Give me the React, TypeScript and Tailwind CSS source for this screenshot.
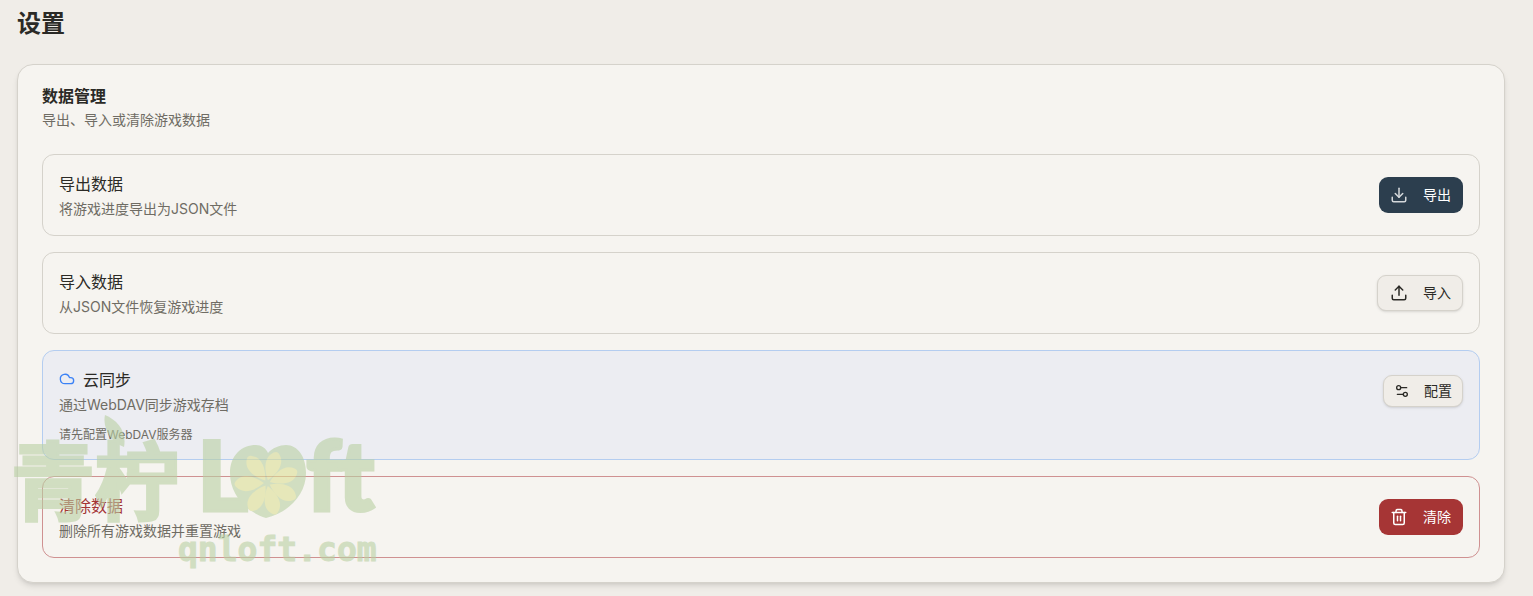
import { Cloud, Download, Settings2, Trash2, Upload } from "lucide-react";

const FONT = "[font-family:Inter,'Noto_Sans_CJK_SC',sans-serif]";
const PETALS = [-35, 18, 68, 118, 165, 212, 268];

function Row({
  title,
  desc,
  children,
}: {
  title: string;
  desc: string;
  children: React.ReactNode;
}) {
  return (
    <div className="flex h-[82px] items-center justify-between rounded-xl border border-[#d5d2cb] p-4">
      <div className="flex flex-col gap-[3px] pt-px">
        <div className="text-base leading-6 text-[#2b2a26]">{title}</div>
        <div className="text-sm leading-5 text-[#6f6c64]">{desc}</div>
      </div>
      {children}
    </div>
  );
}

// Watermark in the lower left corner, sits over the page content.
function Watermark() {
  return (
    <div className="pointer-events-none absolute left-[11px] top-[412px] h-[160px] w-[372px] select-none opacity-60">
      <svg viewBox="0 0 22 32" className="absolute left-[92px] top-[3px] h-[32px] w-[22px]">
        <path d="M2 0C14 5 24 16 21 32C9 28 -1 14 2 0Z" fill="#b9d0a3" />
      </svg>
      <div className="absolute left-0 top-[5px] [font-family:'Noto_Sans_CJK_SC',sans-serif] text-[84px] font-bold leading-[120px] text-[#b9d0a3] [-webkit-text-stroke:3px_#b9d0a3]">
        青柠
      </div>
      <div className="absolute left-[186px] top-[1px] [font-family:Lato,sans-serif] text-[98px] font-black leading-[120px] text-[#b9d0a3] [-webkit-text-stroke:3px_#b9d0a3]">
        L
      </div>
      <svg viewBox="0 0 76 73" className="absolute left-[219px] top-[33px] h-[73px] w-[76px]">
        <path
          d="M36 73C14 66 0 48 0 28C0 10 12 0 26 0C31 0 36 3 38 8C42 3 50 0 56 0C68 0 76 12 76 28C76 50 58 68 36 73Z"
          fill="#b9d0a3"
        />
        {PETALS.map((angle) => (
          <path
            key={angle}
            d="M37 35C30 26 26 14 34 7C36 5 38 5 40 7C48 14 44 26 37 35Z"
            fill="#dcdf95"
            transform={`rotate(${angle} 37 38)`}
          />
        ))}
      </svg>
      <div className="absolute left-[295px] top-[1px] [font-family:Lato,sans-serif] text-[98px] font-black leading-[120px] tracking-[-4px] text-[#b9d0a3] [-webkit-text-stroke:3px_#b9d0a3]">
        ft
      </div>
      <div className="absolute left-[167px] top-[118px] [font-family:'DejaVu_Sans_Mono',monospace] text-[33px] font-bold leading-[40px] text-[#b9d0a3] [-webkit-text-stroke:1px_#b9d0a3]">
        qnloft.com
      </div>
    </div>
  );
}

export default function App() {
  return (
    <div className={`relative h-[596px] overflow-hidden bg-[#f0ede8] px-[17px] pt-[8px] ${FONT}`}>
      <h1 className="text-2xl font-bold leading-8 text-[#2b2a26]">设置</h1>

      <div className="mt-[24px] w-[1488px] rounded-2xl border border-[#d5d2cb] bg-[#f6f4f0] px-6 pt-[19px] pb-6 shadow-md">
        <div className="text-base font-semibold leading-6 text-[#2b2a26]">数据管理</div>
        <div className="mt-[2px] text-sm leading-5 text-[#6f6c64]">导出、导入或清除游戏数据</div>

        <div className="mt-6 flex flex-col gap-4">
          <Row title="导出数据" desc="将游戏进度导出为JSON文件">
            <button className="flex h-9 items-center gap-[15px] rounded-[9px] bg-[#2c3e4e] pl-[11px] pr-3 text-sm text-white">
              <Download size={18} className="opacity-80" />
              导出
            </button>
          </Row>

          <Row title="导入数据" desc="从JSON文件恢复游戏进度">
            <button className="flex h-9 items-center gap-[15px] rounded-[9px] border border-[#d5d2cb] bg-[#f0ede8] pl-3 pr-[11px] text-sm text-[#2b2a26] shadow-sm">
              <Upload size={18} />
              导入
            </button>
          </Row>

          <div className="rounded-xl border border-[#b4cdf0] bg-[#ecedf2] p-4">
            <div className="flex items-center justify-between">
              <div className="flex flex-col gap-[3px] pt-px">
                <div className="flex items-center gap-2 text-base leading-6 text-[#2b2a26]">
                  <Cloud size={16} className="-translate-y-px text-[#3b82f6]" />
                  云同步
                </div>
                <div className="text-sm leading-5 text-[#6f6c64]">通过WebDAV同步游戏存档</div>
              </div>
              <button className="flex h-8 items-center gap-[14px] rounded-[9px] border border-[#d5d2cb] bg-[#f0ede8] px-[10px] text-sm text-[#2b2a26] shadow-sm">
                <Settings2 size={16} />
                配置
              </button>
            </div>
            <div className="mt-3 text-xs leading-4 text-[#6f6c64]">请先配置WebDAV服务器</div>
          </div>

          <div className="flex h-[82px] items-center justify-between rounded-xl border border-[#cf9191] p-4">
            <div className="flex flex-col gap-[3px] pt-px">
              <div className="text-base leading-6 text-[#a33535]">清除数据</div>
              <div className="text-sm leading-5 text-[#6f6c64]">删除所有游戏数据并重置游戏</div>
            </div>
            <button className="flex h-9 items-center gap-[15px] rounded-[9px] bg-[#a63535] pl-[11px] pr-3 text-sm text-white">
              <Trash2 size={18} />
              清除
            </button>
          </div>
        </div>
      </div>

      <Watermark />
    </div>
  );
}
